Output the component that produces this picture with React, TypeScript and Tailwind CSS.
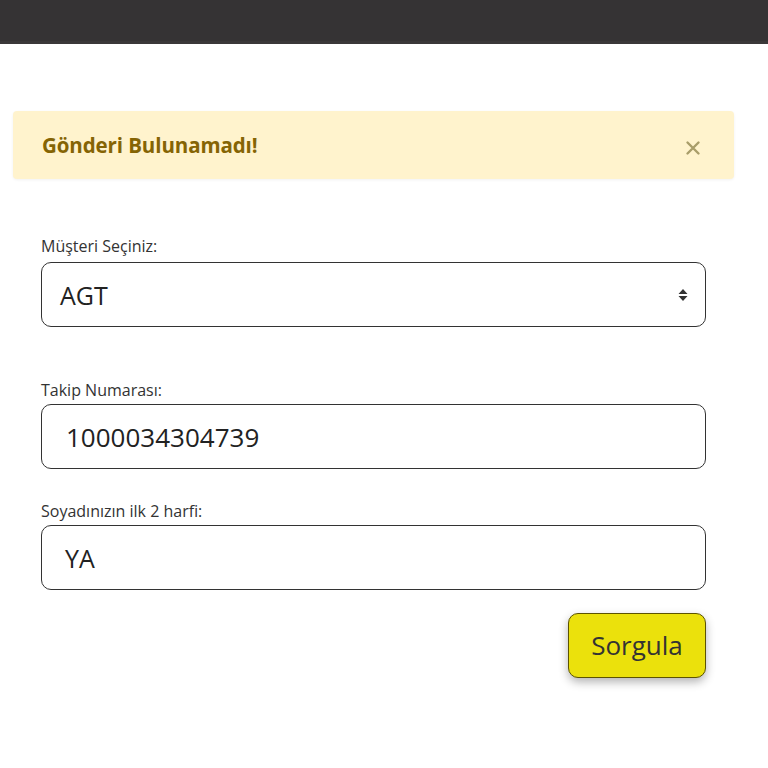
export default function App() {
  return (
    <div className="min-h-[768px] bg-white" style={{ fontFamily: '"Open Sans", "Noto Sans", sans-serif' }}>
      <div className="h-[44px] bg-[#353334] border-b-[3px] border-[#3a3839]" />

      <div className="pt-[67px] pl-[13px] pr-[34px]">
        <div className="flex h-[68px] items-center justify-between rounded-[4px] bg-[#fff3cd] pl-[29px] pr-[33px] shadow-[0_1px_3px_rgba(0,0,0,0.06)]">
          <span className="text-[20.5px] font-bold text-[#856404] tracking-[-0.1px]">Gönderi Bulunamadı!</span>
          <svg width="16" height="16" viewBox="0 0 16 16" className="mt-[6px] text-[#a99d6a]">
            <path d="M2.5 2.5L13.5 13.5M13.5 2.5L2.5 13.5" stroke="currentColor" strokeWidth="2.4" strokeLinecap="round" />
          </svg>
        </div>
      </div>

      <div className="flex flex-col pl-[41px] pr-[62px] pt-[57px]">
        <label className="text-[16px] leading-[20px] text-[#333]">Müşteri Seçiniz:</label>
        <div className="mt-[6px] flex h-[65px] items-center justify-between rounded-[10px] border border-[#333] pl-[18px] pr-[16px]">
          <span className="mt-[2px] text-[25px] text-[#222]">AGT</span>
          <svg width="12" height="16" viewBox="0 0 12 16" className="text-[#333]">
            <path d="M6 2L10.5 7H1.5Z M6 14L1.5 9H10.5Z" fill="currentColor" />
          </svg>
        </div>

        <label className="mt-[53px] text-[16px] leading-[20px] text-[#333]">Takip Numarası:</label>
        <div className="mt-[4px] flex h-[65px] items-center rounded-[10px] border border-[#333] pl-[24px]">
          <span className="mt-[2px] text-[26px] text-[#222]">1000034304739</span>
        </div>

        <label className="mt-[32px] text-[16px] leading-[20px] text-[#333]">Soyadınızın ilk 2 harfi:</label>
        <div className="mt-[4px] flex h-[65px] items-center rounded-[10px] border border-[#333] pl-[23px]">
          <span className="mt-[2px] text-[25px] text-[#222]">YA</span>
        </div>

        <div className="mt-[23px] flex justify-end">
          <button className="flex h-[65px] w-[138px] items-center justify-center rounded-[10px] border border-[#5c5300] bg-[#ebe10c] text-[26px] text-[#333] shadow-[0_4px_10px_rgba(0,0,0,0.3)]">
            Sorgula
          </button>
        </div>
      </div>
    </div>
  );
}
